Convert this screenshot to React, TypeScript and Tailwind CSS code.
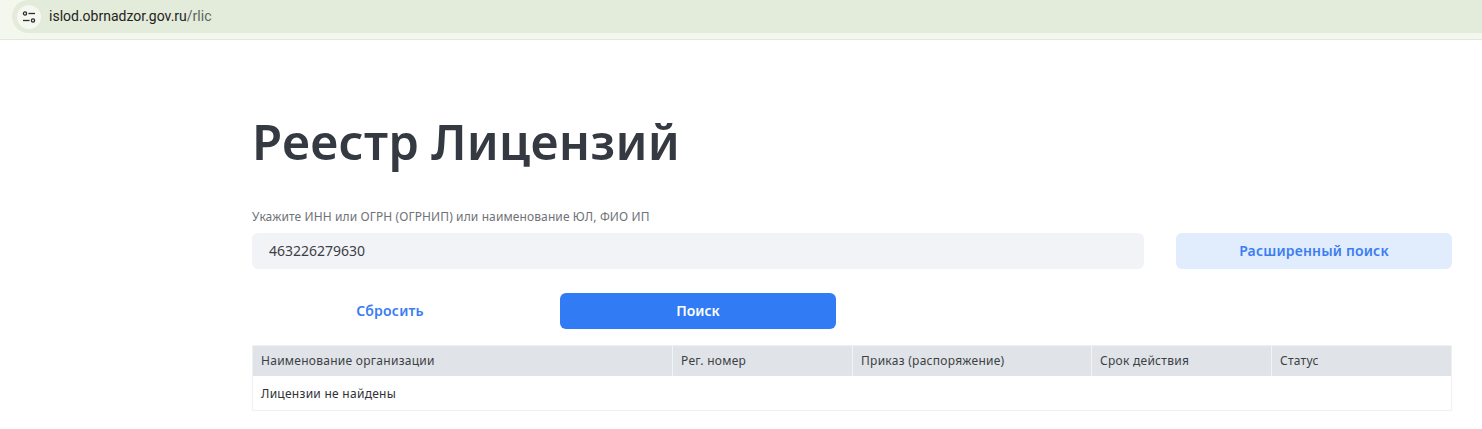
export default function App() {
  const font = { fontFamily: '"Noto Sans", "Open Sans", sans-serif' };
  return (
    <div className="w-[1482px] h-[429px] overflow-hidden bg-white" style={font}>
      <div className="h-10 bg-[#f3f7ee] border-b border-[#e3e6dd] pl-3">
        <div className="h-[33px] bg-[#e3ebda] rounded-l-[17px] flex items-center pl-[5px]">
          <div className="w-[24px] h-[24px] rounded-full bg-[#f5f8f1] flex items-center justify-center">
            <svg width="14" height="14" viewBox="0 0 14 14" fill="none" stroke="#2a2d28" strokeWidth="1.3">
              <circle cx="3" cy="3.5" r="1.6" />
              <path d="M6.5 3.5H13" />
              <path d="M1 10.5H7.5" />
              <circle cx="11" cy="10.5" r="1.6" />
            </svg>
          </div>
          <div className="ml-[8px] text-[14px] text-[#1f231d] font-['Roboto',sans-serif]">
            islod.obrnadzor.gov.ru<span className="text-[#5c6460]">/rlic</span>
          </div>
        </div>
      </div>

      <div className="pl-[252px] pr-[30px]">
        <h1 className="mt-[66px] h-[70px] text-[49px] leading-[70px] font-semibold tracking-[0.28px] [word-spacing:-1px] text-[#353942]">Реестр Лицензий</h1>
        <div className="mt-[33px] h-4 text-[12px] leading-4 tracking-[0.11px] text-[#6f7278]">Укажите ИНН или ОГРН (ОГРНИП) или наименование ЮЛ, ФИО ИП</div>
        <div className="mt-2 flex gap-8">
          <div className="w-[892px] h-9 rounded-md bg-[#f2f3f7] pl-[17px] flex items-center text-sm text-[#3c3f45]">463226279630</div>
          <button className="w-[276px] h-9 rounded-md bg-[#e1ecfd] text-sm font-semibold tracking-[0.18px] text-[#3b7df2]">Расширенный поиск</button>
        </div>
        <div className="mt-6 flex gap-8">
          <button className="w-[276px] h-9 text-sm font-semibold tracking-[0.2px] text-[#3b7df2]">Сбросить</button>
          <button className="w-[276px] h-9 rounded-md bg-[#317bf4] text-sm font-semibold text-white">Поиск</button>
        </div>
        <div className="mt-4 w-[1200px] border border-[#eef0f2] text-xs tracking-[0.27px] text-[#3c3f45]">
          <div className="flex h-[30px] bg-[#e0e3e8] items-center">
            <div className="w-[420px] h-full pl-2 flex items-center border-r border-[#f3f4f6]">Наименование организации</div>
            <div className="w-[180px] h-full pl-2 flex items-center border-r border-[#f3f4f6]">Рег. номер</div>
            <div className="w-[239px] h-full pl-2 flex items-center border-r border-[#f3f4f6]">Приказ (распоряжение)</div>
            <div className="w-[180px] h-full pl-2 flex items-center border-r border-[#f3f4f6]">Срок действия</div>
            <div className="flex-1 h-full pl-2 flex items-center">Статус</div>
          </div>
          <div className="h-[34px] pl-2 pt-px flex items-center text-[#2f3237]">Лицензии не найдены</div>
        </div>
      </div>
    </div>
  );
}
